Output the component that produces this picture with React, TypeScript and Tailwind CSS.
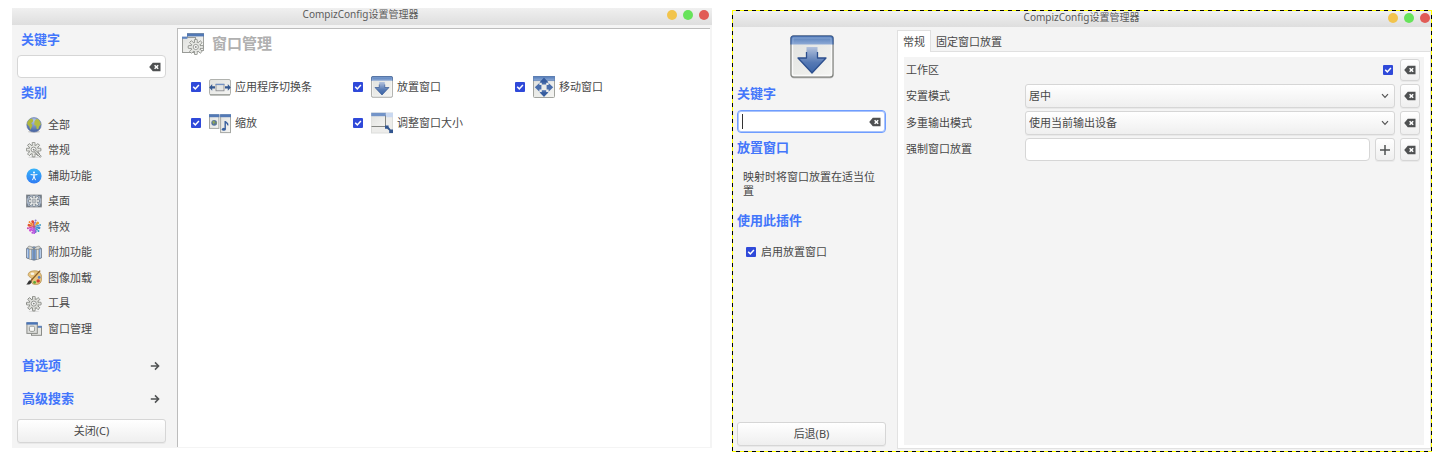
import React from "react";

type IconProps = { className?: string };

const gradients = (
  <svg width="0" height="0" className="absolute" aria-hidden="true">
    <defs>
      <linearGradient id="bar" x1="0" y1="0" x2="0" y2="1">
        <stop offset="0" stopColor="#4f79b8" />
        <stop offset="1" stopColor="#8fabd6" />
      </linearGradient>
      <linearGradient id="pane" x1="0" y1="0" x2="1" y2="1">
        <stop offset="0" stopColor="#e0e1de" />
        <stop offset="1" stopColor="#f5f5f3" />
      </linearGradient>
      <linearGradient id="arrow" x1="0" y1="0" x2="0" y2="1">
        <stop offset="0" stopColor="#b3c2dd" />
        <stop offset="0.6" stopColor="#5579b4" />
        <stop offset="1" stopColor="#3c65a8" />
      </linearGradient>
      <linearGradient id="access" x1="0" y1="0" x2="0" y2="1">
        <stop offset="0" stopColor="#38b4fa" />
        <stop offset="1" stopColor="#2f7bf3" />
      </linearGradient>
      <radialGradient id="sea" cx="0.5" cy="0.2" r="0.8">
        <stop offset="0" stopColor="#b4c4e6" />
        <stop offset="1" stopColor="#41609f" />
      </radialGradient>
    </defs>
  </svg>
);

const spokes = [0, 45, 90, 135, 180, 225, 270, 315];

function GearShape({ cx, cy, s = 1, fill = "#e6e7e3", stroke = "#7f817c" }: { cx: number; cy: number; s?: number; fill?: string; stroke?: string }) {
  return (
    <g transform={`translate(${cx} ${cy}) scale(${s})`}>
      {spokes.map((a) => (
        <rect key={a} x="-1.3" y="-7.3" width="2.6" height="4" rx="0.4" fill={fill} stroke={stroke} strokeWidth="0.9" transform={`rotate(${a})`} />
      ))}
      <circle r="4.7" fill={fill} stroke={stroke} strokeWidth="0.9" />
      {spokes.map((a) => (
        <rect key={a} x="-0.85" y="-6.4" width="1.7" height="3" fill={fill} transform={`rotate(${a})`} />
      ))}
      <circle r="2.5" fill="#f6f6f6" stroke={stroke} strokeWidth="0.8" />
      <circle r="0.9" fill={stroke} />
    </g>
  );
}

function GlobeIcon({ className }: IconProps) {
  return (
    <svg viewBox="0 0 16 16" className={className} aria-hidden="true">
      <ellipse cx="8" cy="14.8" rx="6" ry="1" fill="#c9c9c9" />
      <circle cx="8" cy="7.8" r="7.2" fill="url(#sea)" stroke="#5a70a4" strokeWidth="0.6" />
      <path d="M1.2 5.6 3 2.8 5.6 1.4 7.2 3 6.8 4.8 5 6.2 6.4 8 5.6 10.6 4.2 13 3.4 9.4 1.4 7.4Z" fill="#b0b83e" />
      <path d="M8.6 4 10.4 2 12.6 2.6 14.4 5.4 14.8 8 13.2 9 12.2 12.4 10.6 11.8 10.2 9 8.2 7.4Z" fill="#b3bc44" />
    </svg>
  );
}

function PreferencesIcon({ className }: IconProps) {
  return (
    <svg viewBox="0 0 16 16" className={className} aria-hidden="true">
      <ellipse cx="8" cy="15.2" rx="6" ry="0.7" fill="#d9d9d9" />
      <GearShape cx={7.6} cy={7.6} />
      <path d="M8 8.4 15 15" stroke="#858783" strokeWidth="2" />
      <path d="M8.2 8.6 14.6 14.6" stroke="#f4f4f2" strokeWidth="1" />
    </svg>
  );
}

function AccessibilityIcon({ className }: IconProps) {
  return (
    <svg viewBox="0 0 16 16" className={className} aria-hidden="true">
      <circle cx="8" cy="8" r="7.6" fill="url(#access)" />
      <circle cx="8" cy="4.6" r="1" fill="#fff" />
      <path d="M5 6.6 8 7 11 6.6M8 6.6V9M8 8.8 6.6 11.8M8 8.8 9.4 11.8" stroke="#fff" strokeWidth="1" strokeLinecap="round" fill="none" />
    </svg>
  );
}

function DesktopIcon({ className }: IconProps) {
  return (
    <svg viewBox="0 0 16 16" className={className} aria-hidden="true">
      <rect x="0.5" y="2" width="15" height="12" fill="#a9b6c8" stroke="#8a8d90" strokeWidth="0.8" />
      <path d="M1.2 5.4V2.7H4M12 2.7H14.8V5.4M14.8 10.6V13.3H12M4 13.3H1.2V10.6" stroke="#5f6973" strokeWidth="0.9" fill="none" />
      <GearShape cx={8} cy={8} s={0.76} stroke="#5f6973" fill="#eef0ef" />
    </svg>
  );
}

const petals = ["#e0472f", "#8d7fd0", "#e9a32e", "#4ea3c9", "#3f86d6", "#3aa0c0", "#6a6fd0", "#b54fd8", "#d04fd6", "#c83fae", "#e0562f", "#f08a2b"];

function EffectsIcon({ className }: IconProps) {
  return (
    <svg viewBox="0 0 16 16" className={className} aria-hidden="true">
      {petals.map((color, i) => (
        <g key={color} transform={`rotate(${i * 30 - 15} 8 7.6)`}>
          <path d="M8 7.6 7 3.2 8 2.2 9 3.2Z" fill={color} />
          <circle cx="8" cy={i % 2 ? 1.3 : 2.4} r={i % 2 ? 1 : 1.4} fill={color} />
        </g>
      ))}
      <circle cx="8" cy="7.6" r="1.4" fill="#c4507e" />
      <path d="M6.6 9.4H9.6L9 15H7.4Z" fill="#b95be0" />
    </svg>
  );
}

function ExtrasIcon({ className }: IconProps) {
  return (
    <svg viewBox="0 0 16 16" className={className} aria-hidden="true">
      <path d="M0.6 3.4 8 1.8 15.4 3.4V13L8 15.2 0.6 13Z" fill="#7b9fd2" stroke="#66707e" strokeWidth="0.8" />
      <path d="M1.5 4.4V12.6M14.5 4.4V12.6" stroke="#b5cbe8" />
      <path d="M4.4 3.6V14.2M11.6 3.6V14.2" stroke="#8b8f90" strokeWidth="2.8" />
      <path d="M4.4 3.6V14.2M11.6 3.6V14.2" stroke="#dedfdc" strokeWidth="1.7" />
      <path d="M8 4V15" stroke="#69737f" strokeWidth="0.8" />
      <path d="M8 4C5 .4 1.6.6 1.8 2.8 2 4.8 6 4.6 8 4ZM8 4C11 .4 14.4.6 14.2 2.8 14 4.8 10 4.6 8 4Z" fill="#d7d8d5" stroke="#7b7d79" strokeWidth="0.7" />
    </svg>
  );
}

function PaletteIcon({ className }: IconProps) {
  return (
    <svg viewBox="0 0 16 16" className={className} aria-hidden="true">
      <path d="M2.6 3.2C4.2.4 11 0 13.6 2.2 16.4 5 16.2 10.6 14.2 13 11.6 15.4 6.6 14.8 5.4 12.6 4.8 10.8 7 9.6 5.6 8.2 4.4 7 1 6.4 2.6 3.2Z" fill="#e8c47e" stroke="#b08a48" strokeWidth="0.7" />
      <ellipse cx="6.4" cy="3.8" rx="1.9" ry="1.2" fill="#f6f3ea" />
      <circle cx="13.2" cy="7.4" r="1.4" fill="#5a7fc0" />
      <circle cx="12.2" cy="10.9" r="1.7" fill="#cf3a2e" />
      <circle cx="8.6" cy="12.4" r="1.4" fill="#5ea436" />
      <path d="M14.2.6 4.8 10.8" stroke="#8a5c24" strokeWidth="1.3" />
      <path d="M.2 14.4C2 13.8 1.6 10.8 4.2 10.2L5.8 11.8C5 14.4 2.4 15 .2 14.4Z" fill="#333" />
    </svg>
  );
}

function UtilityIcon({ className }: IconProps) {
  return (
    <svg viewBox="0 0 16 16" className={className} aria-hidden="true">
      <ellipse cx="8" cy="15.3" rx="5.4" ry="0.6" fill="#d6d6d6" />
      <GearShape cx={7.8} cy={7.6} fill="#dcddd9" />
    </svg>
  );
}

function WindowsIcon({ className }: IconProps) {
  return (
    <svg viewBox="0 0 16 16" className={className} aria-hidden="true">
      <rect x="5.5" y="5.5" width="10" height="8.8" fill="#e6e7e4" stroke="#8b8d89" />
      <rect x="5.2" y="4.8" width="10.6" height="2" fill="#5d82bd" />
      <rect x="0.9" y="2" width="10.4" height="10.4" fill="#dcdddb" stroke="#8b8d89" />
      <rect x="0.4" y="1.2" width="11.4" height="2.4" fill="#4a74b6" />
      <rect x="3.4" y="5.2" width="5.2" height="5.2" rx="1.4" fill="#f6f6f4" stroke="#9a9c98" />
    </svg>
  );
}

function WindowManagementIcon({ className }: IconProps) {
  return (
    <svg viewBox="0 0 22 22" className={className} aria-hidden="true">
      <rect x="5.5" y="0.5" width="16" height="17" fill="url(#pane)" stroke="#9fa19d" />
      <rect x="5" y="0.4" width="17" height="3" fill="#5279b6" />
      <rect x="0.5" y="4.5" width="13" height="15" fill="url(#pane)" stroke="#999b97" />
      <rect x="0" y="3.6" width="5.4" height="2.2" fill="#5f84bf" />
      <GearShape cx={13.8} cy={14} s={1.04} stroke="#8f918c" />
    </svg>
  );
}

function SwitcherIcon({ className }: IconProps) {
  return (
    <svg viewBox="0 0 22 22" className={className} aria-hidden="true">
      <rect x="0.5" y="3.5" width="21" height="15.4" rx="1.5" fill="url(#pane)" stroke="#b0b2ae" />
      <path d="M1 18.9H21" stroke="#8d8f8b" />
      <rect x="7" y="8.4" width="8" height="6.4" fill="#e4e5e2" stroke="#84868a" strokeWidth="0.8" />
      <path d="M6.6 8.4H15.4" stroke="#7392c4" strokeWidth="1.4" />
      <path d="M0.2 11.4 3.2 8V10.2H6V12.6H3.2V14.8ZM21.8 11.4 18.8 8V10.2H16V12.6H18.8V14.8Z" fill="#345891" />
    </svg>
  );
}

function PlaceIcon({ className }: IconProps) {
  return (
    <svg viewBox="0 0 44 44" className={className} aria-hidden="true">
      <rect x="1" y="2.5" width="42" height="41" rx="3" fill="#000" opacity="0.18" />
      <rect x="1" y="1" width="42" height="41" rx="2.5" fill="url(#pane)" stroke="#858783" strokeWidth="1.4" />
      <rect x="2.5" y="2.5" width="39" height="38" rx="1.5" fill="none" stroke="#fafafa" strokeWidth="1.3" />
      <path d="M1 9.5V3.5Q1 1 3.5 1H40.5Q43 1 43 3.5V9.5Z" fill="url(#bar)" />
      <path d="M1 9.5V3.5Q1 1 3.5 1H40.5Q43 1 43 3.5V9.5" fill="none" stroke="#3b5f9c" strokeWidth="1.2" />
      <path d="M3 9V3H41V9" fill="none" stroke="#93afd9" strokeWidth="0.8" />
      <path d="M16.5 12H27.5V23H36L22 38 8 23H16.5Z" fill="url(#arrow)" />
      <path d="M16.5 17V23H8L22 38 36 23H27.5V17" fill="none" stroke="#2c4f8e" strokeWidth="1.3" strokeLinejoin="round" />
    </svg>
  );
}

function MoveIcon({ className }: IconProps) {
  return (
    <svg viewBox="0 0 22 22" className={className} aria-hidden="true">
      <rect x="0.5" y="0.5" width="21" height="21" rx="1" fill="url(#pane)" stroke="#a2a49f" />
      <rect x="0.2" y="0.2" width="21.6" height="4.6" fill="url(#bar)" stroke="#5276ae" strokeWidth="0.5" />
      <path d="M11 1.8 15.4 6.4H13.2V8.4H8.8V6.4H6.6ZM11 20.8 15.4 16.2H13.2V14.2H8.8V16.2H6.6ZM1.8 11.3 6.4 6.9V9.1H8.4V13.5H6.4V15.7ZM20.2 11.3 15.6 6.9V9.1H13.6V13.5H15.6V15.7Z" fill="#4a6eac" />
      <path d="M11 20.8 15.4 16.2H6.6ZM11 1.8 15.4 6.4H6.6Z" fill="#365c9e" />
    </svg>
  );
}

function ScaleIcon({ className }: IconProps) {
  return (
    <svg viewBox="0 0 22 22" className={className} aria-hidden="true">
      <rect x="0.5" y="3" width="9.4" height="13.4" fill="url(#pane)" stroke="#a5a7a3" />
      <rect x="0" y="2.2" width="10.4" height="3" fill="#5379b5" />
      <circle cx="5.2" cy="10.8" r="2.9" fill="#58749f" />
      <path d="M3.2 9.6 5.4 8.6 6 10.4 4.4 12.4ZM6.4 10.6 7.8 10 7.2 12.4Z" fill="#8fa855" />
      <rect x="11.6" y="3" width="9.9" height="17.6" fill="url(#pane)" stroke="#a5a7a3" />
      <rect x="11.1" y="2.2" width="10.9" height="3" fill="#5379b5" />
      <path d="M16.2 9V17M16.2 9.4C17.4 11 19.2 10.6 18.8 13.4" stroke="#3a609f" strokeWidth="1.4" fill="none" />
      <ellipse cx="14.8" cy="17.2" rx="2" ry="1.5" fill="#3a609f" />
    </svg>
  );
}

function ResizeIcon({ className }: IconProps) {
  return (
    <svg viewBox="0 0 22 22" className={className} aria-hidden="true">
      <rect x="0.5" y="1" width="21" height="20" fill="#ededeb" stroke="#dcdddb" />
      <rect x="14" y="0.8" width="8" height="4.4" fill="#c9d8f0" />
      <rect x="0.5" y="1" width="14.6" height="13.4" fill="url(#pane)" />
      <path d="M14.5 3V14.5H0.5" stroke="#858783" fill="none" />
      <rect x="0.2" y="0.8" width="14.6" height="3.4" fill="#7394c8" />
      <path d="M14 13.4H17.6V15L19.6 17.4H22V21H18.2V18.6L16.2 16.8H14Z" fill="#31558f" />
    </svg>
  );
}

function EraseIcon() {
  return (
    <svg viewBox="0 0 12 10" className="h-[10px] w-3" aria-hidden="true">
      <path d="M0.2 5 3.8 0.8H11.5V9.2H3.8Z" fill="#4f5152" />
      <path d="M5.6 3.2 9.2 6.8M9.2 3.2 5.6 6.8" stroke="#fff" strokeWidth="1.5" />
    </svg>
  );
}

function ArrowRightIcon() {
  return (
    <svg viewBox="0 0 10 10" className="size-[10px]" aria-hidden="true">
      <path d="M0.8 5H8.4M5 1.4 8.6 5 5 8.6" stroke="#4f5152" strokeWidth="1.5" fill="none" />
    </svg>
  );
}

function Tick({ label, className = "" }: { label: React.ReactNode; className?: string }) {
  return (
    <label className={`flex items-center ${className}`}>
      <span className="grid shrink-0">
        <input type="checkbox" defaultChecked className="peer col-start-1 row-start-1 size-[10px] appearance-none rounded-[1px] bg-white ring-1 ring-[#b5b5b5] checked:bg-[#2f49d9] checked:ring-0" />
        <svg viewBox="0 0 10 10" className="pointer-events-none col-start-1 row-start-1 size-[10px] opacity-0 peer-checked:opacity-100" aria-hidden="true">
          <path d="M2.2 4.8 4.3 6.9 7.9 3" stroke="#fff" strokeWidth="1.5" fill="none" />
        </svg>
      </span>
      {label}
    </label>
  );
}

function TitleBar({ className = "" }: { className?: string }) {
  return (
    <header className={`grid grid-cols-[1fr_auto_1fr] items-start bg-linear-to-b from-[#f0f0f0] to-[#dedede] text-[#5c5c5c] ${className}`}>
      <h1 className="col-start-2 text-[10px] leading-[13px]">CompizConfig设置管理器</h1>
      <div className="mt-[2px] flex justify-end gap-[6px]">
        <button type="button" aria-label="最小化" className="size-[10px] rounded-full bg-[#f2c44c]" />
        <button type="button" aria-label="最大化" className="size-[10px] rounded-full bg-[#67e35a]" />
        <button type="button" aria-label="关闭" className="size-[10px] rounded-full bg-[#e15b56]" />
      </div>
    </header>
  );
}

function SideHeading({ children, htmlFor }: { children: React.ReactNode; htmlFor?: string }) {
  return (
    <h2 className="h-5 text-[13px] leading-[18px] font-bold text-[#4376fb]">
      {htmlFor ? <label htmlFor={htmlFor}>{children}</label> : children}
    </h2>
  );
}

const buttonLook = "rounded-[3px] border border-[#d6d6d6] bg-linear-to-b from-white to-[#efefef] shadow-[0_1px_0_#e9e9e9]";

const categories = [
  { name: "全部", Icon: GlobeIcon },
  { name: "常规", Icon: PreferencesIcon },
  { name: "辅助功能", Icon: AccessibilityIcon },
  { name: "桌面", Icon: DesktopIcon },
  { name: "特效", Icon: EffectsIcon },
  { name: "附加功能", Icon: ExtrasIcon },
  { name: "图像加载", Icon: PaletteIcon },
  { name: "工具", Icon: UtilityIcon },
  { name: "窗口管理", Icon: WindowsIcon },
];

const plugins = [
  { name: "应用程序切换条", Icon: SwitcherIcon },
  { name: "放置窗口", Icon: PlaceIcon },
  { name: "移动窗口", Icon: MoveIcon },
  { name: "缩放", Icon: ScaleIcon },
  { name: "调整窗口大小", Icon: ResizeIcon },
];

function PluginListWindow() {
  return (
    <section className="flex flex-col self-start bg-[#f4f4f4]">
      <TitleBar className="h-[17px] pr-[3px]" />
      <div className="flex">
        <aside className="flex w-[165px] shrink-0 flex-col pt-[5px] pr-[11px] pb-[5px] pl-[5px]">
          <div className="pl-1">
            <SideHeading htmlFor="filter">关键字</SideHeading>
          </div>
          <div className="mt-[5px] flex h-[23px] items-center rounded-[4px] border border-[#d6d6d6] bg-white pr-1">
            <input id="filter" type="text" className="min-w-0 flex-1 bg-transparent px-1 text-[11px] outline-none" />
            <button type="button" aria-label="清除"><EraseIcon /></button>
          </div>
          <div className="mt-[5px] pl-1">
            <SideHeading>类别</SideHeading>
          </div>
          <ul className="mt-[9px] grid h-[230px] auto-rows-fr pl-[9px]">
            {categories.map(({ name, Icon }) => (
              <li key={name} className="flex">
                <button type="button" className="flex flex-1 items-center gap-[6px] text-left">
                  <Icon className="size-4" />
                  {name}
                </button>
              </li>
            ))}
          </ul>
          <button type="button" className="mt-[14px] flex items-center justify-between pr-[6px] pl-[5px]">
            <SideHeading>首选项</SideHeading>
            <ArrowRightIcon />
          </button>
          <button type="button" className="mt-[13px] flex items-center justify-between pr-[6px] pl-[5px]">
            <SideHeading>高级搜索</SideHeading>
            <ArrowRightIcon />
          </button>
          <button type="button" className={`mt-[10px] h-6 ${buttonLook}`}>关闭(C)</button>
        </aside>
        <main className="mt-[3px] mr-[2px] mb-px flex-1 border-t border-l border-[#bcbcbc] bg-white">
          <div className="flex items-center gap-2 pt-1 pl-1">
            <WindowManagementIcon className="size-[22px]" />
            <h2 className="pb-[2px] text-[15px] leading-5 font-bold text-[#b0b0b0]">窗口管理</h2>
          </div>
          <ul className="mt-[14px] ml-[13px] grid auto-rows-[36px] grid-cols-[repeat(3,162px)]">
            {plugins.map(({ name, Icon }) => (
              <li key={name} className="flex items-center">
                <Tick
                  label={
                    <span className="ml-2 flex items-center gap-1">
                      <Icon className="size-[22px]" />
                      {name}
                    </span>
                  }
                />
              </li>
            ))}
          </ul>
        </main>
      </div>
    </section>
  );
}

function EraseButton({ className = "h-6" }: IconProps) {
  return (
    <button type="button" aria-label="重置" className={`flex w-5 shrink-0 items-center justify-center ${className} ${buttonLook}`}>
      <EraseIcon />
    </button>
  );
}

function SelectRow({ id, label, value }: { id: string; label: string; value: string }) {
  return (
    <div className="flex items-center gap-[5px]">
      <label htmlFor={id} className="w-[114px] shrink-0">{label}</label>
      <div className="grid flex-1 items-center">
        <select id={id} className={`col-start-1 row-start-1 h-6 w-full appearance-none pl-[3px] text-[11px] leading-4 ${buttonLook}`}>
          <option>{value}</option>
        </select>
        <svg viewBox="0 0 8 6" className="pointer-events-none col-start-1 row-start-1 mr-[6px] h-[6px] w-2 justify-self-end" aria-hidden="true">
          <path d="M1 1.2 4 4.4 7 1.2" stroke="#555" strokeWidth="1.2" fill="none" />
        </svg>
      </div>
      <EraseButton />
    </div>
  );
}

const dashX = "h-px bg-[repeating-linear-gradient(90deg,#ff0_0_4px,#000_4px_8px)]";
const dashY = "w-px shrink-0 bg-[repeating-linear-gradient(180deg,#ff0_0_4px,#000_4px_8px)]";

function PluginSettingsWindow() {
  return (
    <section className="mt-[2px] flex flex-col">
      <div className={dashX} />
      <div className="flex">
        <div className={dashY} />
        <div className="min-w-0 flex-1 bg-[#f4f4f4]">
          <TitleBar className="h-4 pr-px" />
          <div className="flex">
            <aside className="flex w-[164px] shrink-0 flex-col pt-2 pr-[11px] pb-[5px] pl-1">
              <PlaceIcon className="size-11 self-center" />
              <div className="mt-[5px]">
                <SideHeading htmlFor="setting-filter">关键字</SideHeading>
              </div>
              <div className="relative mt-[6px] flex h-[23px] items-center rounded-[4px] border border-[#6f9dff] bg-white pr-1 ring-1 ring-[#a9c3fb] ring-inset">
                <input id="setting-filter" type="text" className="min-w-0 flex-1 bg-transparent px-1 text-[11px] outline-none" />
                <span className="absolute left-[4px] h-[15px] w-px bg-[#333]" />
                <button type="button" aria-label="清除"><EraseIcon /></button>
              </div>
              <div className="mt-[5px]">
                <SideHeading>放置窗口</SideHeading>
              </div>
              <p className="mt-3 px-[6px] leading-[14px]">映射时将窗口放置在适当位置</p>
              <div className="mt-[13px]">
                <SideHeading>使用此插件</SideHeading>
              </div>
              <Tick className="mt-[13px] ml-[9px] leading-4" label={<span className="ml-[5px]">启用放置窗口</span>} />
              <button type="button" className={`mt-[162px] h-6 ${buttonLook}`}>后退(B)</button>
            </aside>
            <main className="mt-[3px] mb-[2px] flex min-w-0 flex-1 flex-col">
              <div role="tablist" className="flex h-[22px]">
                <button type="button" role="tab" aria-selected="true" className="border border-b-0 border-[#e0e0e0] bg-white px-[5px] pt-px">常规</button>
                <button type="button" role="tab" aria-selected="false" className="flex-1 border-b border-[#e0e0e0] px-[5px] pt-[3px] text-left">固定窗口放置</button>
              </div>
              <div role="tabpanel" className="flex flex-1 flex-col border-x border-b border-[#e2e2e2] bg-white px-[6px] pt-[5px] pb-[3px]">
                <div className="flex flex-1 flex-col gap-[3px] bg-[#f4f4f4] pt-[2px] pr-1 pl-[2px]">
                  <div className="flex items-center gap-[5px]">
                    <Tick className="flex-1 flex-row-reverse justify-between pr-[2px]" label={<span>工作区</span>} />
                    <EraseButton className="h-[22px]" />
                  </div>
                  <SelectRow id="placement" label="安置模式" value="居中" />
                  <SelectRow id="output" label="多重输出模式" value="使用当前输出设备" />
                  <div className="flex items-center gap-[5px]">
                    <label htmlFor="force" className="w-[114px] shrink-0">强制窗口放置</label>
                    <input id="force" type="text" className="h-[23px] min-w-0 flex-1 rounded-[4px] border border-[#d6d6d6] bg-white px-1 text-[11px] outline-none" />
                    <button type="button" aria-label="添加" className={`flex h-[23px] w-5 shrink-0 items-center justify-center ${buttonLook}`}>
                      <svg viewBox="0 0 12 12" className="size-3" aria-hidden="true">
                        <path d="M6 1V11M1 6H11" stroke="#4f5152" strokeWidth="1.5" />
                      </svg>
                    </button>
                    <EraseButton className="h-[23px]" />
                  </div>
                </div>
              </div>
            </main>
          </div>
        </div>
        <div className={dashY} />
      </div>
      <div className={dashX} />
    </section>
  );
}

export default function App() {
  return (
    <div className="grid min-h-screen grid-cols-2 items-start gap-5 bg-white px-3 pt-2 font-['Noto_Sans','Noto_Sans_CJK_SC',sans-serif] text-[11px] text-[#484848]">
      {gradients}
      <PluginListWindow />
      <PluginSettingsWindow />
    </div>
  );
}
